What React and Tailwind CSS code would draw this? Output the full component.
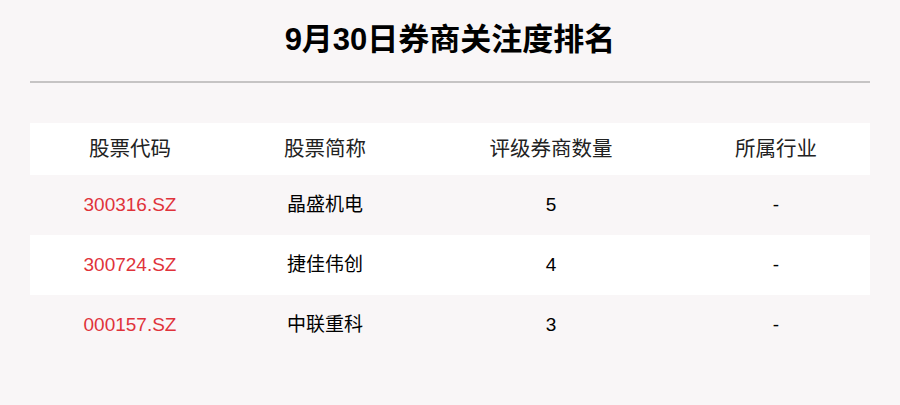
export default function App() {
  const rows = [
    ["300316.SZ", "晶盛机电", "5", "-"],
    ["300724.SZ", "捷佳伟创", "4", "-"],
    ["000157.SZ", "中联重科", "3", "-"],
  ];
  const font = { fontFamily: '"Liberation Sans", Arial, "Noto Sans CJK SC", sans-serif' };
  return (
    <div className="w-[900px] h-[405px] bg-[#f9f6f7] px-[30px] overflow-hidden" style={font}>
      <div className="h-[81px] flex items-center justify-center">
        <h1 className="text-[31px] font-bold text-black">9月30日券商关注度排名</h1>
      </div>
      <div className="h-[2px] bg-[#c6c4c4]" />
      <div className="h-[40px]" />
      <div className="grid grid-cols-[200px_190px_262px_188px] h-[52px] bg-white items-center text-center text-[20.5px] text-[#222]">
        <div>股票代码</div>
        <div>股票简称</div>
        <div>评级券商数量</div>
        <div>所属行业</div>
      </div>
      {rows.map((r, i) => (
        <div
          key={i}
          className={`grid grid-cols-[200px_190px_262px_188px] h-[60px] items-center text-center text-[19px] ${i % 2 === 1 ? "bg-white" : "bg-[#f9f6f7]"}`}
        >
          <div className="text-[#e0333b]">{r[0]}</div>
          <div className="text-black">{r[1]}</div>
          <div className="text-black">{r[2]}</div>
          <div className="text-black">{r[3]}</div>
        </div>
      ))}
    </div>
  );
}
